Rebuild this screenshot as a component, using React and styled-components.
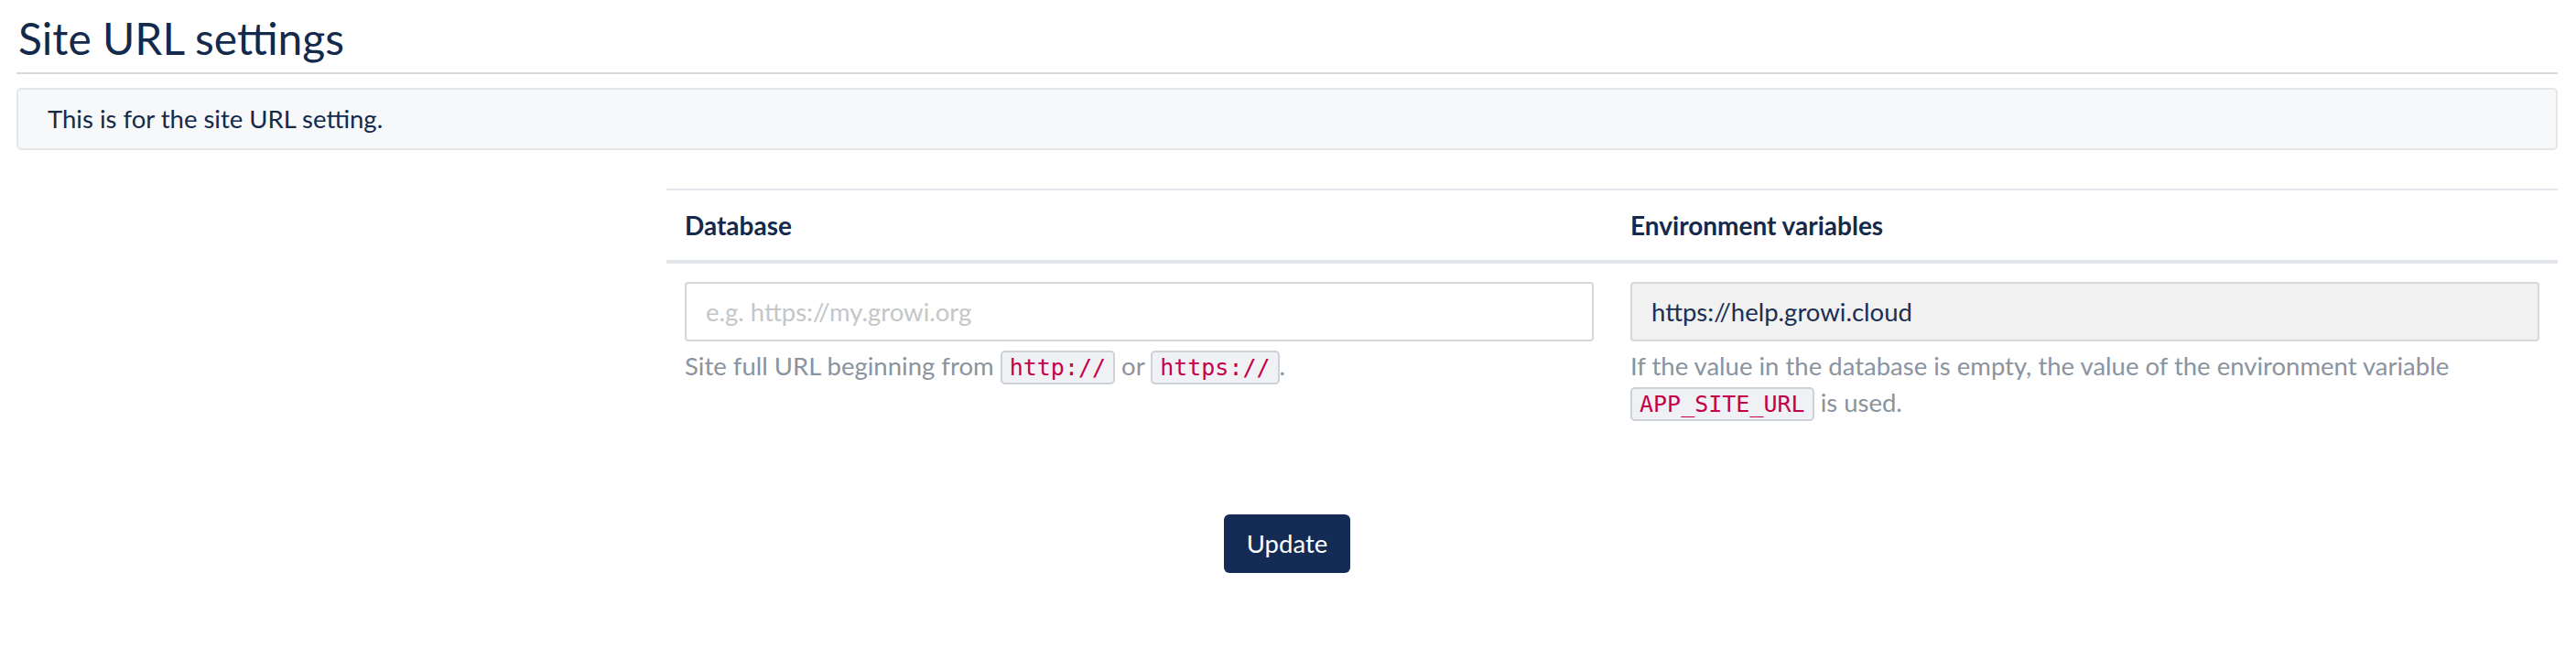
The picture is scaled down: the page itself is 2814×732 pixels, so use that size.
import React from "react";
import styled, { createGlobalStyle } from "styled-components";

const GlobalStyle = createGlobalStyle`
  body {
    margin: 0;
    background: #ffffff;
    font-family: Lato, "Noto Sans", sans-serif;
    font-size: 27.5px;
    line-height: 40px;
    color: #132a4c;
  }
`;

const Page = styled.div`
  padding: 13px 20px 60px 18px;
`;

const Title = styled.h2`
  margin: 0;
  font-size: 48px;
  font-weight: 400;
  line-height: 1.2;
  color: #132a4c;
  padding-left: 2px;
  padding-bottom: 8px;
  border-bottom: 2px solid #d6d9dd;
`;

const Alert = styled.div`
  margin-top: 15px;
  padding: 12px 32px;
  background: #f7f8fa;
  border: 2px solid #e4e7ea;
  border-radius: 5px;
  color: #132a4c;
`;

const TableWrap = styled.div`
  margin-top: 42px;
  margin-left: calc(25% + 16px);
  display: grid;
  grid-template-columns: 1fr 1fr;
`;

const HeadCell = styled.div`
  padding: 18px 20px;
  border-top: 2px solid #e3e6ea;
  border-bottom: 4px solid #e2e5e9;
  font-weight: 700;
  font-size: 28px;
  color: #132a4c;
`;

const BodyCell = styled.div`
  padding: 20px;
`;

const Input = styled.input`
  box-sizing: border-box;
  display: block;
  width: 100%;
  height: 65px;
  padding: 0 21px;
  font-family: Lato, "Noto Sans", sans-serif;
  font-size: 27.5px;
  color: #1b2f52;
  background: ${(p) => (p.readOnly ? "#f1f1f1" : "#ffffff")};
  border: 2px solid #d4d8dc;
  border-radius: 4px;
  outline: none;

  &::placeholder {
    color: #c4c6c8;
  }
`;

const Help = styled.div`
  margin-top: 7px;
  color: #8a94a0;
`;

const Code = styled.code`
  font-family: "DejaVu Sans Mono", "Liberation Mono", monospace;
  font-size: 25px;
  color: #c5004a;
  background: #eff1f4;
  border: 2px solid #cdd2d8;
  border-radius: 5px;
  padding: 2px 8px;
`;

const Actions = styled.div`
  display: flex;
  justify-content: center;
  margin-top: 80px;
`;

const Button = styled.button`
  font-family: Lato, "Noto Sans", sans-serif;
  font-size: 27.5px;
  line-height: 40px;
  padding: 12px 25px;
  color: #ffffff;
  background: #142b55;
  border: none;
  border-radius: 6px;
  cursor: pointer;
`;

export default function App() {
  return (
    <>
      <GlobalStyle />
      <Page>
        <Title>Site URL settings</Title>
        <Alert>This is for the site URL setting.</Alert>
        <TableWrap>
          <HeadCell>Database</HeadCell>
          <HeadCell>Environment variables</HeadCell>
          <BodyCell>
            <Input type="text" placeholder="e.g. https://my.growi.org" />
            <Help>
              Site full URL beginning from <Code>http://</Code> or{" "}
              <Code>https://</Code>.
            </Help>
          </BodyCell>
          <BodyCell>
            <Input type="text" readOnly value="https://help.growi.cloud" />
            <Help>
              If the value in the database is empty, the value of the
              environment variable <Code>APP_SITE_URL</Code> is used.
            </Help>
          </BodyCell>
        </TableWrap>
        <Actions>
          <Button>Update</Button>
        </Actions>
      </Page>
    </>
  );
}
